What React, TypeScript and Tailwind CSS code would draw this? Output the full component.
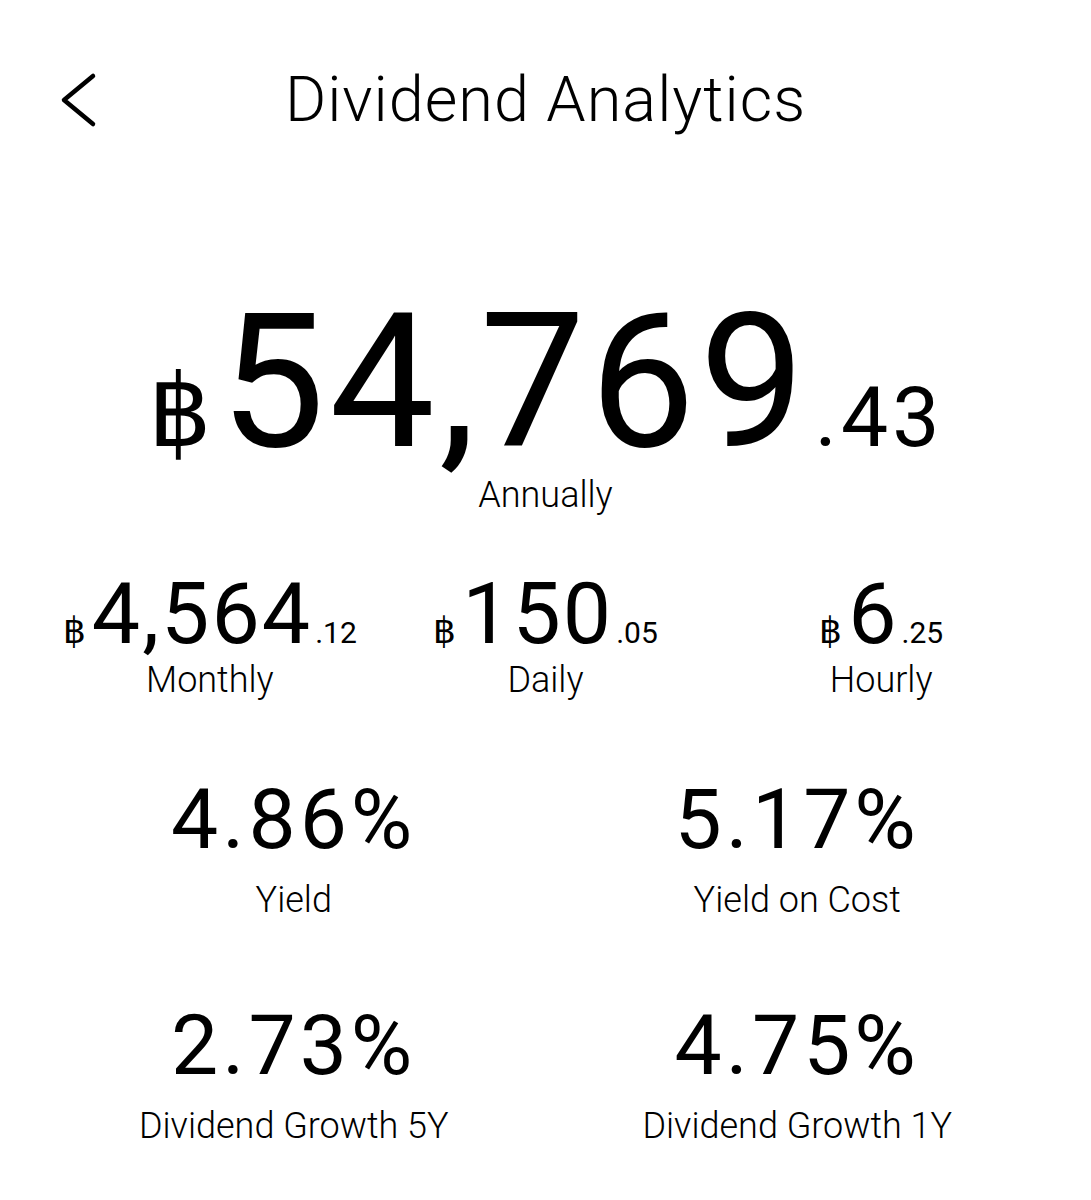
const font = { fontFamily: 'Roboto, "Noto Sans", sans-serif' };

function Back() {
  return (
    <svg width="40" height="56" viewBox="0 0 40 56" fill="none" className="-ml-[3px]">
      <path d="M34 4 L5 28 L34 52" stroke="black" strokeWidth="4.5" strokeLinecap="round" strokeLinejoin="round" />
    </svg>
  );
}

function Money({ whole, cents }: { whole: string; cents: string }) {
  return (
    <div className="flex items-baseline justify-center leading-none">
      <span className="text-[36px] mr-[6px]">฿</span>
      <span className="text-[86px] tracking-[2px]">{whole}</span>
      <span className="text-[30px] ml-[3px]">.{cents}</span>
    </div>
  );
}

function Stat({ value, label }: { value: string; label: string }) {
  return (
    <div className="flex flex-col items-center">
      <div className="text-[84px] leading-none tracking-[4px]">{value}</div>
      <div className="text-[36px] font-light leading-none mt-[20px]">{label}</div>
    </div>
  );
}

export default function App() {
  return (
    <div className="w-[1091px] min-h-[1200px] bg-white text-black" style={font}>
      {/* Header */}
      <div className="grid grid-cols-[1fr_auto_1fr] items-center px-[62px] pt-[68px]">
        <Back />
        <h1 className="text-[63px] leading-none font-light tracking-[1px]">Dividend Analytics</h1>
        <div />
      </div>

      {/* Annual */}
      <div className="flex flex-col items-center mt-[157px]">
        <div className="flex items-baseline leading-none">
          <span className="text-[100px] mr-[8px]">฿</span>
          <span className="text-[188px] tracking-[4px]">54,769</span>
          <span className="text-[84px] ml-[6px] tracking-[4px]">.43</span>
        </div>
        <div className="text-[36px] font-light leading-none mt-[1px]">Annually</div>
      </div>

      {/* Monthly / Daily / Hourly */}
      <div className="grid grid-cols-3 px-[42px] mt-[58px]">
        {[
          { whole: '4,564', cents: '12', label: 'Monthly' },
          { whole: '150', cents: '05', label: 'Daily' },
          { whole: '6', cents: '25', label: 'Hourly' },
        ].map((m) => (
          <div key={m.label} className="flex flex-col items-center">
            <Money whole={m.whole} cents={m.cents} />
            <div className="text-[36px] font-light leading-none mt-[5px]">{m.label}</div>
          </div>
        ))}
      </div>

      {/* Yield */}
      <div className="grid grid-cols-2 px-[42px] mt-[80px]">
        <Stat value="4.86%" label="Yield" />
        <Stat value="5.17%" label="Yield on Cost" />
      </div>

      {/* Growth */}
      <div className="grid grid-cols-2 px-[42px] mt-[86px]">
        <Stat value="2.73%" label="Dividend Growth 5Y" />
        <Stat value="4.75%" label="Dividend Growth 1Y" />
      </div>
    </div>
  );
}
